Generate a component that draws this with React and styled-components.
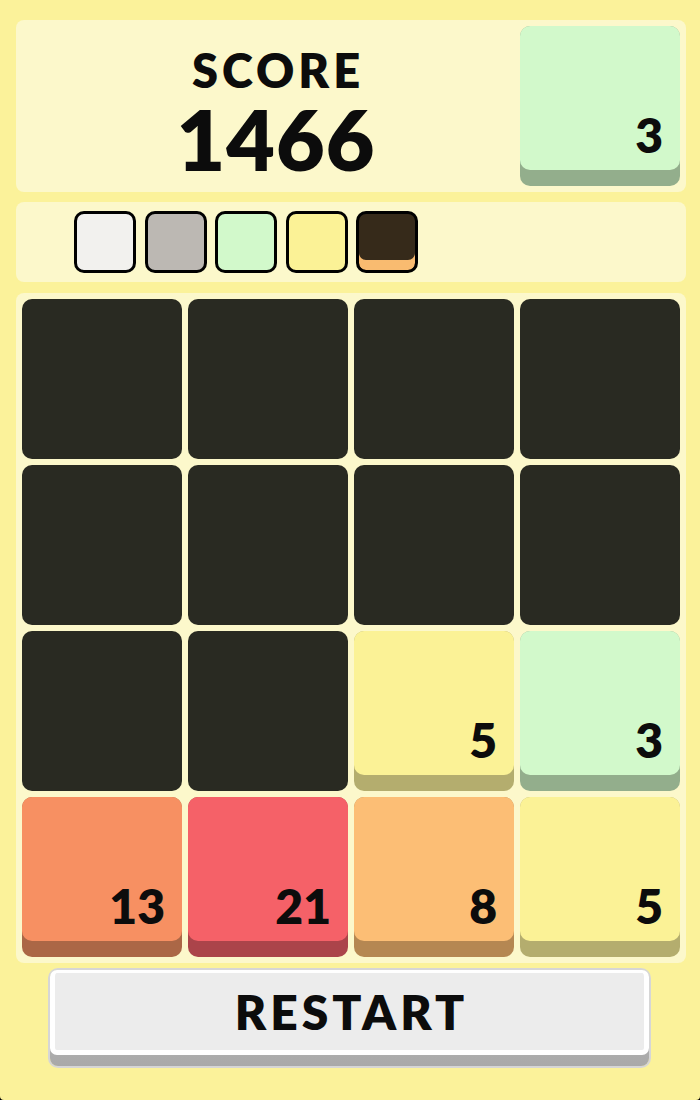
import React from 'react';
import styled, { createGlobalStyle } from 'styled-components';

const GlobalStyle = createGlobalStyle`
  html, body {
    margin: 0;
    padding: 0;
    background: #000;
  }
  * {
    box-sizing: border-box;
  }
`;

const Page = styled.div`
  width: 700px;
  min-height: 1100px;
  background: #fbf29a;
  border-radius: 0 0 4px 4px;
  padding: 20px 14px 0 16px;
  display: flex;
  flex-direction: column;
  font-family: Lato, 'Open Sans', sans-serif;
  color: #0c0c0c;
`;

const Panel = styled.div`
  background: #fcf8cb;
  border-radius: 8px;
  width: 670px;
`;

const ScorePanel = styled(Panel)`
  display: flex;
  align-items: center;
  height: 172px;
  padding: 6px;
`;

const ScoreBox = styled.div`
  flex: 1;
  display: flex;
  flex-direction: column;
  align-items: center;
  padding: 14px 0 0 10px;
`;

const ScoreLabel = styled.div`
  font-size: 47px;
  font-weight: 800;
  line-height: 52px;
  letter-spacing: 4px;
  margin-right: -4px;
`;

const ScoreValue = styled.div`
  font-size: 84px;
  font-weight: 800;
  line-height: 86px;
  letter-spacing: 1px;
`;

const NextPanel = styled(Panel)`
  margin-top: 10px;
  height: 80px;
  display: flex;
  align-items: center;
  gap: 8.5px;
  padding-left: 58px;
`;

const Swatch = styled.div`
  width: 62px;
  height: 62px;
  border: 3.5px solid #000;
  border-radius: 10px;
  background: ${p => p.$color};
  box-shadow: ${p => (p.$rim ? `inset 0 -10px 0 ${p.$rim}` : 'none')};
`;

const Board = styled(Panel)`
  margin-top: 11px;
  padding: 6px;
  display: grid;
  grid-template-columns: repeat(4, 160px);
  grid-auto-rows: 160px;
  gap: 6px;
`;

const Empty = styled.div`
  background: #292a22;
  border-radius: 10px;
`;

const Tile = styled.div`
  width: 160px;
  height: 160px;
  flex-shrink: 0;
  border-radius: 10px;
  background: ${p => p.$shade};
`;

const Face = styled.div`
  height: 144px;
  border-radius: 10px;
  background: ${p => p.$color};
  display: flex;
  align-items: flex-end;
  justify-content: flex-end;
  padding: 0 17px 11px 0;
  font-size: 48px;
  font-weight: 800;
  line-height: 1;
`;

const RestartButton = styled.button`
  margin: 7px 0 0 34px;
  width: 599px;
  height: 96px;
  padding: 0 0 11px;
  border: none;
  border-radius: 8px;
  background: linear-gradient(#c4c4c4, #a9a9a9);
  box-shadow: 0 0 0 2px #d6d6d6;
  cursor: pointer;
  display: flex;
  font-family: inherit;
`;

const RestartFace = styled.span`
  flex: 1;
  display: flex;
  align-items: center;
  justify-content: center;
  background: #ececec;
  border: 5px solid #fff;
  border-top-width: 3px;
  border-radius: 7px;
  font-size: 48px;
  font-weight: 800;
  letter-spacing: 4px;
  padding-left: 4px;
  color: #0c0c0c;
`;

const TILE_COLORS = {
  3: ['#d2f9cb', '#93ae8c'],
  5: ['#fbf296', '#b4ad6e'],
  8: ['#fcbe75', '#b58752'],
  13: ['#f79062', '#ab6746'],
  21: ['#f56168', '#ab444a'],
};

const board = [
  [0, 0, 0, 0],
  [0, 0, 0, 0],
  [0, 0, 5, 3],
  [13, 21, 8, 5],
];

const swatches = [
  { color: '#f2f1ee' },
  { color: '#bcb8b3' },
  { color: '#d2f9cb' },
  { color: '#fbf296' },
  { color: '#362a1a', rim: '#f9bb70' },
];

const NumberTile = ({ value }) => {
  const [color, shade] = TILE_COLORS[value];
  return (
    <Tile $shade={shade}>
      <Face $color={color}>{value}</Face>
    </Tile>
  );
};

const App = () => (
  <>
    <GlobalStyle />
    <Page>
      <ScorePanel>
        <ScoreBox>
          <ScoreLabel>SCORE</ScoreLabel>
          <ScoreValue>1466</ScoreValue>
        </ScoreBox>
        <NumberTile value={3} />
      </ScorePanel>

      <NextPanel>
        {swatches.map((s, i) => (
          <Swatch key={i} $color={s.color} $rim={s.rim} />
        ))}
      </NextPanel>

      <Board>
        {board.flat().map((v, i) => (v ? <NumberTile key={i} value={v} /> : <Empty key={i} />))}
      </Board>

      <RestartButton>
        <RestartFace>RESTART</RestartFace>
      </RestartButton>
    </Page>
  </>
);

export default App;
